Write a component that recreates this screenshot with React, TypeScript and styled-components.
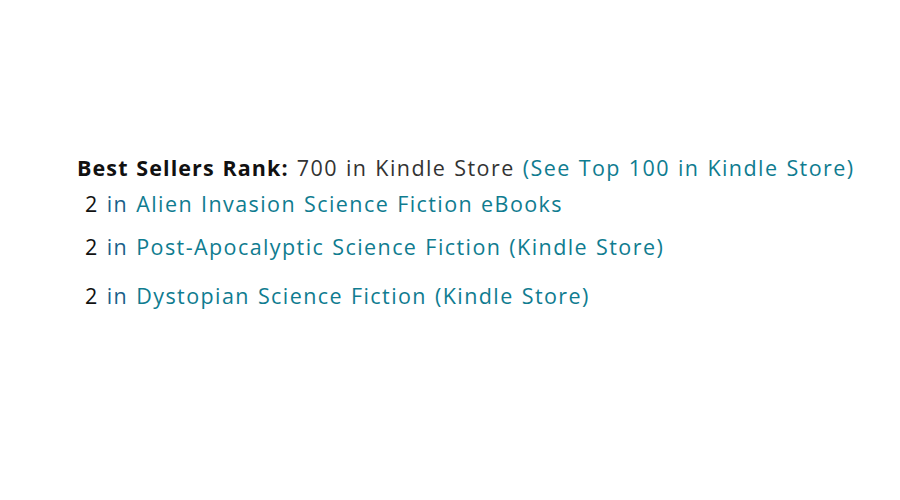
import { createGlobalStyle, styled } from "styled-components"

const GlobalStyle = createGlobalStyle`
  html, body {
    margin: 0;
    padding: 0;
    background: #ffffff;
  }
`

const ranks = [
  { rank: 2, category: "Alien Invasion Science Fiction eBooks", gap: 0 },
  { rank: 2, category: "Post-Apocalyptic Science Fiction (Kindle Store)", gap: 7 },
  { rank: 2, category: "Dystopian Science Fiction (Kindle Store)", gap: 13 },
]

const App = () => {
  return (
    <StyledPage>
      <GlobalStyle />
      <StyledDetails>
        <StyledHeadline>
          <StyledLabel>Best Sellers Rank:</StyledLabel> 700 in Kindle Store{ " " }
          <StyledLink>(See Top 100 in Kindle Store)</StyledLink>
        </StyledHeadline>
        <StyledList>
          {
            ranks.map(({ rank, category, gap }) => (
              <StyledItem key={ category } $gap={ gap }>
                { rank }<StyledIn> in </StyledIn><StyledLink>{ category }</StyledLink>
              </StyledItem>
            ))
          }
        </StyledList>
      </StyledDetails>
    </StyledPage>
  )
}

const StyledPage = styled("div")`
  width: 900px;
  height: 500px;
  box-sizing: border-box;
  padding: 154px 0 0 77px;
  font-family: "Open Sans", "Liberation Sans", sans-serif;
  font-size: 21.5px;
  letter-spacing: 1.42px;
  word-spacing: 1px;
  color: #333333;
`

const StyledDetails = styled("div")`
  display: flex;
  flex-direction: column;
`

const StyledHeadline = styled("div")`
  line-height: 28px;
  white-space: nowrap;
`

const StyledLabel = styled("span")`
  font-weight: 700;
  letter-spacing: 1.1px;
  color: #111111;
`

const StyledLink = styled("span")`
  color: #0f7c90;
`

const StyledIn = styled("span")`
  color: #1a5f8a;
`

const StyledList = styled("ul")`
  list-style: none;
  margin: 8px 0 0;
  padding: 0 0 0 8px;
  display: flex;
  flex-direction: column;
  gap: 8px;
`

const StyledItem = styled("li")<{ $gap: number }>`
  line-height: 28px;
  color: #111111;
  white-space: nowrap;
  margin-top: ${ ({ $gap }) => $gap }px;
`

export default App
